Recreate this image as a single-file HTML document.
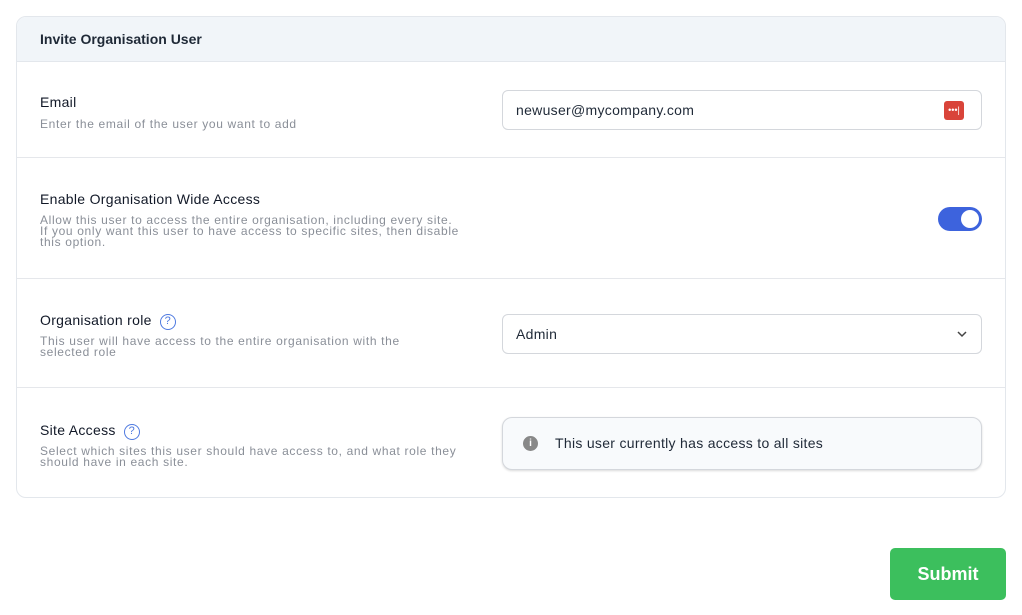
<!DOCTYPE html>
<html><head><style>
*{box-sizing:border-box;margin:0;padding:0}
body{width:1022px;height:615px;background:#fff;font-family:"Liberation Sans",sans-serif;color:#1f2937;position:relative;overflow:hidden}
.card{position:absolute;left:16px;top:16px;width:990px;height:482px;border:1px solid #e3e7ec;border-radius:10px;overflow:hidden}
.hdr{height:45px;background:#f1f5f9;border-bottom:1px solid #e3e7ec;padding:14px 23px;font-size:14px;font-weight:bold;color:#1f2937}
.row{position:absolute;left:0;width:988px;border-top:1px solid #e5e7eb}
.t{position:absolute;left:23px;font-size:14px;color:#111827;letter-spacing:0.3px}
.d{position:absolute;left:23px;font-size:12px;color:#8a8f98;line-height:11px;white-space:nowrap;letter-spacing:0.65px}
.inp{position:absolute;left:485px;width:480px;height:40px;border:1px solid #d4d7dc;border-radius:6px;font-size:14px;padding:11px 13px;color:#1f2937;letter-spacing:0.3px}
.q{display:inline-block;width:16px;height:16px;border:1.5px solid #4f7ae0;border-radius:50%;color:#4f7ae0;font-size:11px;text-align:center;line-height:13px;margin-left:8px;vertical-align:1px;letter-spacing:0}
</style></head><body>
<div class="card">
<div class="hdr">Invite Organisation User</div>
<div class="t" style="top:77px">Email</div>
<div class="d" style="top:102px">Enter the email of the user you want to add</div>
<div class="inp" style="top:73px">newuser@mycompany.com
<div style="position:absolute;right:17px;top:10px;width:20px;height:19px;background:#d9443a;border-radius:3px;color:#fff;font-size:9px;text-align:center;line-height:18px;letter-spacing:0">•••|</div></div>
<div class="row" style="top:140px"></div>
<div class="t" style="top:174px">Enable Organisation Wide Access</div>
<div class="d" style="top:198px">Allow this user to access the entire organisation, including every site.<br>If you only want this user to have access to specific sites, then disable<br>this option.</div>
<div style="position:absolute;left:921px;top:190px;width:44px;height:24px;background:#3d63dd;border-radius:12px"><div style="position:absolute;right:3px;top:3px;width:18px;height:18px;background:#fff;border-radius:50%"></div></div>
<div class="row" style="top:261px"></div>
<div class="t" style="top:295px">Organisation role<span class="q">?</span></div>
<div class="d" style="top:319px">This user will have access to the entire organisation with the<br>selected role</div>
<div class="inp" style="top:297px">Admin
<svg style="position:absolute;right:14px;top:15px" width="10" height="8" viewBox="0 0 10 8"><path d="M1 2l4 4 4-4" fill="none" stroke="#444" stroke-width="1.5"/></svg></div>
<div class="row" style="top:370px"></div>
<div class="t" style="top:405px">Site Access<span class="q">?</span></div>
<div class="d" style="top:429px">Select which sites this user should have access to, and what role they<br>should have in each site.</div>
<div class="inp" style="top:400px;height:53px;border-radius:10px;background:#f8fafc;padding:17px 0 0 52px;box-shadow:0 1px 2px rgba(0,0,0,.15)">This user currently has access to all sites
<div style="position:absolute;left:20px;top:18px;width:15px;height:15px;border-radius:50%;background:#888;color:#fff;font-size:10px;font-weight:bold;text-align:center;line-height:15px;letter-spacing:0">i</div></div>
</div>
<div style="position:absolute;left:890px;top:548px;width:116px;height:52px;background:#3cbf5d;border-radius:5px;color:#fff;font-size:18px;font-weight:bold;text-align:center;line-height:52px">Submit</div>
</body></html>
